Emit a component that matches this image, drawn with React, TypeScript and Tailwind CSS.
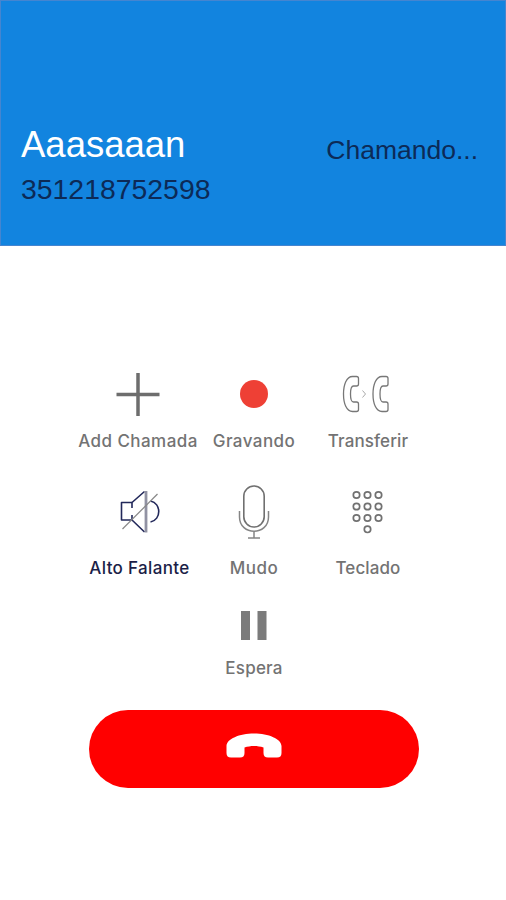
import type { ReactNode } from "react";

type ActionProps = {
  label: string;
  children: ReactNode;
  className: string;
  viewBox: string;
};

function Action({ label, children, className, viewBox }: ActionProps) {
  return (
    <button className={`flex flex-col items-center justify-between self-start ${className}`}>
      <svg className="block h-[60px] w-[60px] shrink-0" viewBox={viewBox} fill="none" strokeLinejoin="round">
        {children}
      </svg>
      <span className="block h-5 whitespace-nowrap text-[17px] leading-[22px]">{label}</span>
    </button>
  );
}

const handset =
  "M356.500 376.500h-4c-6 0-9 8-9 17.500s3 17.500 9 17.500h4q2 0 2-2v-5.500q0-2-2-2h-3c-2 0-3-3-3-8s1-8 3-8h3q2 0 2-2v-5.500q0-2-2-2z";

export default function App() {
  return (
    <main className="flex h-[900px] w-[506px] flex-col overflow-hidden bg-white font-['Inter','Liberation_Sans',sans-serif] font-medium text-[#737373]">
      <header className="flex h-[246px] justify-between border border-[#4585d0] bg-[#1284df] pt-[121px] pr-[27px] pl-[20px] font-['Liberation_Sans',sans-serif] font-normal">
        <div>
          <h1 className="text-[36.500px] leading-[46px] text-white">Aaasaaan</h1>
          <p className="text-[28.400px] leading-[42px] text-[#0c2a57]">351218752598</p>
        </div>
        <p className="pt-[8px] text-[26.500px] leading-[40px] text-[#0c2a57]">Chamando...</p>
      </header>

      <section className="mt-[118px] grid h-[313px] grid-cols-[116px_116px_112px] grid-rows-[118px_114px_81px] pl-[80px]">
        <Action label="Add Chamada" viewBox="108 364 60 60" className="h-[86px] tracking-[0.45px]">
          <path d="M138 373v43M116.500 394.500h43" stroke="#6d6d6d" strokeWidth="3.500" />
        </Action>
        <Action label="Gravando" viewBox="224 364 60 60" className="h-[86px] tracking-[0.45px]">
          <circle cx="254" cy="394" r="14" fill="#ee4035" />
        </Action>
        <Action label="Transferir" viewBox="338 364 60 60" className="h-[86px] tracking-[0.1px]">
          <path d={handset} stroke="#777" strokeWidth="1.300" />
          <path d={handset} transform="translate(29.500 0)" stroke="#777" strokeWidth="1.300" />
          <path d="m362.500 390.500 3 3.500-3 3.500" stroke="#aaa" />
        </Action>
        <Action label="Alto Falante" viewBox="109.500 482 60 60" className="h-[95px] pl-[3px] tracking-[0.35px] text-[#1b1e47]">
          <path d="M131.500 508v-5.500h-10.500v17.500h10.500v-5" stroke="#22285a" strokeWidth="1.600" />
          <path d="m131.500 502.500 12.500-11M131.500 520l12.500 12" stroke="#22285a" strokeWidth="1.600" />
          <path d="M145.500 491v41.500" stroke="#9192a3" strokeWidth="2.800" />
          <path d="M150 501c11 2 11 19 0 21" stroke="#22285a" strokeWidth="1.600" />
          <path d="m122 529 35-35" stroke="#888" strokeWidth="1.200" />
        </Action>
        <Action label="Mudo" viewBox="224 482 60 60" className="h-[95px] tracking-[0.5px]">
          <rect x="243.800" y="486" width="20.400" height="41" rx="10.200" stroke="#707070" strokeWidth="1.600" />
          <path d="M239.500 511v6c0 19 29 19 29 0v-6M254 531.500v6M248 538h12" stroke="#858585" strokeWidth="1.500" />
        </Action>
        <Action label="Teclado" viewBox="338 482 60 60" className="h-[95px] tracking-[0.1px]">
          {[495, 506.500, 518].map((y) =>
            [356.500, 367.500, 378.500].map((x) => (
              <circle key={`${x}-${y}`} cx={x} cy={y} r="3.200" stroke="#717171" strokeWidth="1.700" />
            )),
          )}
          <circle cx="367.500" cy="529.300" r="3.200" stroke="#717171" strokeWidth="1.700" />
        </Action>
        <div className="col-start-2 grid">
          <Action label="Espera" viewBox="224 596 60 60" className="h-[81px] tracking-[0.2px]">
            <path d="M241 611h9v29h-9zM257.500 611h9v29h-9z" fill="#7b7b7b" />
          </Action>
        </div>
      </section>

      <button
        aria-label="Desligar"
        className="mt-[33px] ml-[89px] flex h-[78px] w-[330px] items-center justify-center rounded-full bg-[#ff0000]"
      >
        <svg className="h-[40px] w-[60px]" viewBox="224 729 60 40">
          <path
            d="M226.500 746c0-7 13-12.500 27.500-12.500s27.500 5.500 27.500 12.500v7c0 3-1.500 4.500-4.500 4.500h-9c-3 0-4.500-1.500-4.500-4.500v-5.500c-6-2-13-2-19 0v5.500c0 3-1.500 4.500-4.500 4.500h-9c-3 0-4.500-1.500-4.500-4.500z"
            fill="white"
          />
        </svg>
      </button>
    </main>
  );
}
